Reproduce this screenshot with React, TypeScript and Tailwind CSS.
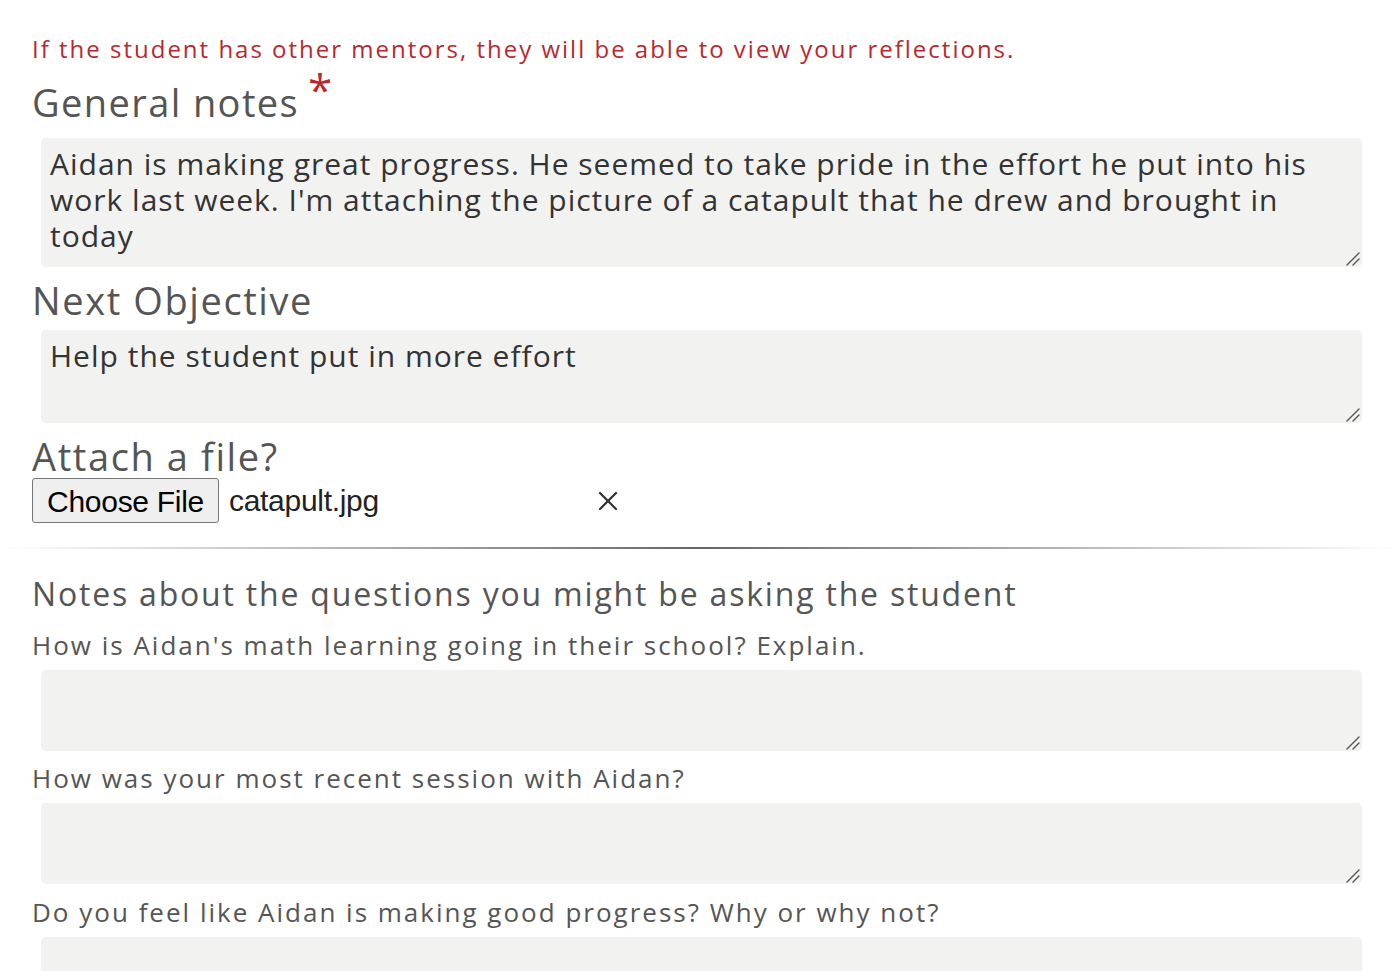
import { X } from "lucide-react";

const font = { fontFamily: "'Open Sans', 'DejaVu Sans', sans-serif" };

function NoteBox({ value, h }: { value?: string; h: string }) {
  return (
    <div className="relative ml-[9px] w-[1321px]">
      <textarea
        defaultValue={value}
        className={`block w-full ${h} resize-none rounded-[5px] bg-[#f2f2f1] px-[9px] pt-[8px] text-[30px] leading-[36px] tracking-[1px] text-[#333] outline-none font-['Open_Sans',sans-serif]`}
      />
      {/* resize grip */}
      <svg className="absolute right-[2px] bottom-[1px] h-[14px] w-[14px] pointer-events-none" viewBox="0 0 14 14">
        <path d="M1 13 L13 1 M7 13 L13 7" stroke="#555" strokeWidth="1.4" strokeLinecap="round" />
      </svg>
    </div>
  );
}

export default function App() {
  return (
    <div className="min-h-screen bg-white overflow-hidden relative" style={font}>
      <div className="pl-[32px] pt-[33px]">
        <p className="text-[24px] leading-[32px] tracking-[2px] text-[#b8282e]">
          If the student has other mentors, they will be able to view your reflections.
        </p>

        <div className="flex items-start mt-[13px]">
          <h2 className="text-[38px] leading-[48px] tracking-[1.4px] text-[#555]">General notes</h2>
          <span className="ml-[9px] -mt-[1px] text-[44px] leading-[24px] text-[#b8282e]">*</span>
        </div>
        <div className="mt-[12px]">
          <NoteBox
            h="h-[129px]"
            value="Aidan is making great progress. He seemed to take pride in the effort he put into his work last week. I'm attaching the picture of a catapult that he drew and brought in today"
          />
        </div>

        <h2 className="mt-[9px] text-[38px] leading-[48px] tracking-[1.6px] text-[#555]">Next Objective</h2>
        <div className="mt-[6px]">
          <NoteBox h="h-[93px]" value="Help the student put in more effort" />
        </div>

        <h2 className="mt-[11px] text-[38px] leading-[44px] tracking-[1.6px] text-[#555]">Attach a file?</h2>
        <div className="flex items-center font-['Liberation_Sans',Arial,sans-serif]">
          <button className="h-[45px] w-[187px] rounded-[3px] border border-[#767676] bg-[#efefef] text-[30px] tracking-[-0.3px] text-black">
            Choose File
          </button>
          <span className="ml-[10px] text-[30px] tracking-[-0.3px] text-[#222]">catapult.jpg</span>
          <X className="ml-[213px] h-[32px] w-[32px] text-[#333]" strokeWidth={1.7} />
        </div>
      </div>

      <div className="mt-[24px] h-[2px] w-full bg-gradient-to-r from-transparent via-[#666] to-transparent" />

      <div className="pl-[32px]">
        <h3 className="mt-[25px] text-[32px] leading-[40px] tracking-[1.8px] text-[#555]">
          Notes about the questions you might be asking the student
        </h3>

        <p className="mt-[15px] text-[26px] leading-[32px] tracking-[2px] text-[#555]">
          How is Aidan's math learning going in their school? Explain.
        </p>
        <div className="mt-[9px]">
          <NoteBox h="h-[81px]" />
        </div>

        <p className="mt-[11px] text-[26px] leading-[32px] tracking-[2px] text-[#555]">
          How was your most recent session with Aidan?
        </p>
        <div className="mt-[9px]">
          <NoteBox h="h-[81px]" />
        </div>

        <p className="mt-[12px] text-[26px] leading-[32px] tracking-[2px] text-[#555]">
          Do you feel like Aidan is making good progress? Why or why not?
        </p>
        <div className="mt-[9px]">
          <NoteBox h="h-[81px]" />
        </div>
      </div>

      <div className="absolute bottom-0 left-0 right-0 h-[3px] bg-[#e9e9ea]" />
    </div>
  );
}
